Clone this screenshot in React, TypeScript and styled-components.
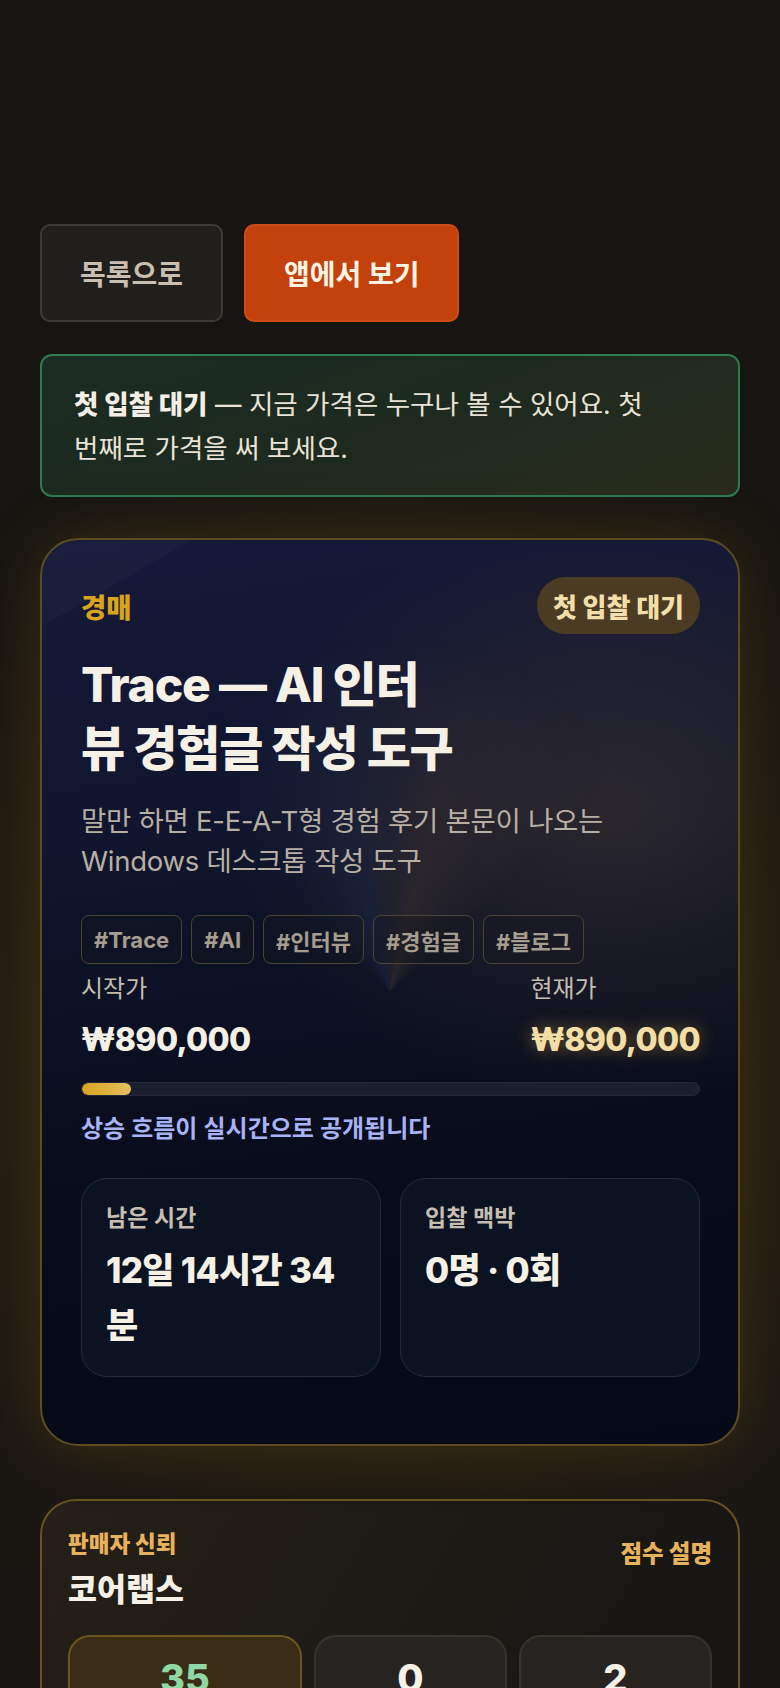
import React from "react";
import styled, { createGlobalStyle } from "styled-components";

const GlobalStyle = createGlobalStyle`
  html, body {
    margin: 0;
    padding: 0;
  }
  body {
    background: #161513;
    font-family: "Inter", "Noto Sans CJK KR", "Noto Sans", sans-serif;
    color: #f3ede0;
  }
  * { box-sizing: border-box; }
`;

const Page = styled.main`
  min-height: 1688px;
  padding: 224px 40px 60px 40px;
  background:
    radial-gradient(ellipse 85% 42% at 50% 56%, rgba(75, 58, 16, 0.6) 0%, rgba(52, 41, 16, 0.42) 45%, rgba(22, 21, 19, 0) 85%),
    linear-gradient(180deg, #161513 0%, #171511 30%, #1c1812 60%, #171513 100%);
  display: flex;
  flex-direction: column;
`;

const ActionRow = styled.div`
  display: flex;
  gap: 21px;
`;

const ActionButton = styled.button<{ $primary?: boolean }>`
  height: 98px;
  padding: 0 38px;
  border-radius: 10px;
  font-family: inherit;
  font-size: 28px;
  font-weight: 700;
  display: inline-flex;
  align-items: center;
  cursor: pointer;
  border: 2px solid ${(p) => (p.$primary ? "#cf4c14" : "#3c3a36")};
  background: ${(p) => (p.$primary ? "#c2410c" : "#201f1c")};
  color: ${(p) => (p.$primary ? "#fff3e4" : "#c9bfb0")};
`;

const Notice = styled.div`
  margin-top: 32px;
  padding: 26px 32px 25px;
  border: 2px solid #2e7a51;
  border-radius: 12px;
  background: linear-gradient(160deg, #1a2c23 0%, #1d2a20 45%, #2a2c1b 100%);
  font-size: 26.5px;
  line-height: 44px;
  word-break: keep-all;
  color: #e9e3d6;
  strong {
    font-weight: 800;
    color: #f4efe4;
  }
`;

const AuctionCard = styled.section`
  margin-top: 41px;
  position: relative;
  isolation: isolate;
  border: 2px solid #5b4c22;
  border-radius: 38px;
  padding: 37px 38px 67px 39px;
  overflow: hidden;
  box-shadow: 0 0 60px rgba(120, 92, 25, 0.3);
  background:
    radial-gradient(ellipse 55% 32% at 82% 30%, rgba(125, 98, 52, 0.24) 0%, rgba(0, 0, 0, 0) 100%),
    linear-gradient(150deg, rgba(255, 255, 255, 0.025) 0%, rgba(255, 255, 255, 0.025) 6.5%, rgba(0, 0, 0, 0) 6.7%),
    linear-gradient(172deg, #161a39 0%, #10142b 35%, #080c1b 65%, #060a17 100%);

  &::before {
    content: "";
    position: absolute;
    inset: 0;
    z-index: -1;
    pointer-events: none;
    background: conic-gradient(
      from 0deg at 50% 50%,
      rgba(140, 125, 110, 0.1) 0deg,
      rgba(190, 140, 60, 0.14) 14deg,
      rgba(0, 0, 0, 0) 50deg,
      rgba(0, 0, 0, 0) 310deg,
      rgba(60, 100, 180, 0.14) 346deg,
      rgba(140, 125, 110, 0.1) 360deg
    );
    -webkit-mask-image: radial-gradient(ellipse 45% 40% at 50% 50%, #000 0%, rgba(0, 0, 0, 0.5) 50%, transparent 100%);
    mask-image: radial-gradient(ellipse 45% 40% at 50% 50%, #000 0%, rgba(0, 0, 0, 0.5) 50%, transparent 100%);
  }
`;

const CardHead = styled.div`
  display: flex;
  justify-content: space-between;
  align-items: center;
`;

const Kicker = styled.span`
  font-size: 27.5px;
  font-weight: 800;
  color: #d9a41c;
`;

const StatusPill = styled.span`
  height: 57px;
  padding: 0 16px;
  display: inline-flex;
  align-items: center;
  border-radius: 999px;
  background: #4a3b22;
  color: #f2deaa;
  font-size: 26px;
  font-weight: 800;
`;

const Title = styled.h1`
  margin: 19px 0 0;
  font-size: 48px;
  font-weight: 800;
  line-height: 64px;
  letter-spacing: -0.025em;
  color: #f6f1e6;
`;

const Subtitle = styled.p`
  margin: 20px 0 0;
  font-size: 27.5px;
  line-height: 40px;
  color: #b7afa3;
  letter-spacing: -0.01em;
`;

const TagRow = styled.div`
  margin-top: 34px;
  display: flex;
  flex-wrap: wrap;
  gap: 9px;
`;

const Tag = styled.span`
  height: 49px;
  padding: 0 12px;
  display: inline-flex;
  align-items: center;
  border: 1.5px solid #4b4230;
  border-radius: 8px;
  background: rgba(20, 22, 30, 0.35);
  font-size: 22px;
  font-weight: 700;
  color: #a59d8f;
`;

const PriceRow = styled.div`
  margin-top: 10px;
  display: flex;
  justify-content: space-between;
`;

const PriceCol = styled.div`
  display: flex;
  flex-direction: column;
  gap: 14px;
`;

const PriceLabel = styled.span`
  font-size: 24px;
  line-height: 30px;
  color: #c4bcaf;
`;

const PriceValue = styled.span<{ $current?: boolean }>`
  font-size: 32px;
  line-height: 44px;
  font-weight: 800;
  letter-spacing: -0.02em;
  color: ${(p) => (p.$current ? "#f3dfa6" : "#f5f0e6")};
  text-shadow: ${(p) => (p.$current ? "0 0 18px rgba(230, 180, 70, 0.45)" : "none")};
`;

const Track = styled.div`
  margin-top: 20px;
  height: 14px;
  border-radius: 999px;
  background: #1b1f2d;
  border: 1px solid #23283a;
  overflow: hidden;
`;

const Fill = styled.div`
  height: 100%;
  border-radius: 999px;
  background: linear-gradient(90deg, #d9a21c 0%, #e7c063 100%);
`;

const LiveNote = styled.p`
  margin: 17px 0 0;
  font-size: 24px;
  line-height: 32px;
  font-weight: 600;
  color: #a7b3f5;
`;

const StatGrid = styled.div`
  margin-top: 33px;
  display: grid;
  grid-template-columns: 1fr 1fr;
  gap: 19px;
`;

const StatBox = styled.div`
  border: 1.5px solid #242a3c;
  border-radius: 26px;
  background: #0b1222;
  padding: 24px 24px 23px;
  display: flex;
  flex-direction: column;
  gap: 10px;
`;

const StatLabel = styled.span`
  font-size: 23px;
  line-height: 30px;
  font-weight: 600;
  color: #c6beb0;
`;

const StatValue = styled.span`
  font-size: 35px;
  line-height: 55px;
  font-weight: 800;
  letter-spacing: -0.02em;
  color: #f6f1e6;
`;

const SellerCard = styled.section`
  margin-top: 53px;
  border: 2px solid #6a5322;
  border-radius: 36px;
  padding: 29px 26px 28px;
  background: linear-gradient(120deg, #251f17 0%, #1d1a16 55%, #151413 100%);
`;

const SellerHead = styled.div`
  display: flex;
  justify-content: space-between;
  align-items: flex-start;
`;

const SellerMeta = styled.div`
  display: flex;
  flex-direction: column;
  gap: 12px;
`;

const SellerKicker = styled.span`
  font-size: 22.5px;
  line-height: 28px;
  font-weight: 800;
  color: #e6b35c;
`;

const SellerName = styled.span`
  font-size: 31.5px;
  line-height: 40px;
  font-weight: 800;
  color: #f6f1e6;
`;

const LinkButton = styled.button`
  margin-top: 9px;
  padding: 0;
  border: 0;
  background: none;
  font-family: inherit;
  font-size: 23.5px;
  line-height: 30px;
  font-weight: 800;
  color: #e6b35c;
  cursor: pointer;
`;

const ScoreGrid = styled.div`
  margin-top: 25px;
  display: grid;
  grid-template-columns: 1.21fr 1fr 1fr;
  gap: 12px;
`;

const ScoreBox = styled.div<{ $highlight?: boolean }>`
  border-radius: 22px;
  border: 2px solid ${(p) => (p.$highlight ? "#6d5522" : "#36322d")};
  background: ${(p) => (p.$highlight ? "#3a2c15" : "#262320")};
  padding: 18px 12px 20px;
  display: flex;
  flex-direction: column;
  align-items: center;
  gap: 6px;
`;

const ScoreNum = styled.span<{ $tone?: string }>`
  font-size: 38px;
  line-height: 46px;
  font-weight: 800;
  color: ${(p) => p.$tone || "#f6f1e6"};
`;

const ScoreLabel = styled.span`
  font-size: 18px;
  color: #b9b0a2;
`;

export default function App() {
  const progress = 8;
  return (
    <>
      <GlobalStyle />
      <Page>
        <ActionRow>
          <ActionButton>목록으로</ActionButton>
          <ActionButton $primary>앱에서 보기</ActionButton>
        </ActionRow>

        <Notice>
          <strong>첫 입찰 대기</strong> — 지금 가격은 누구나 볼 수 있어요. 첫 번째로 가격을 써 보세요.
        </Notice>

        <AuctionCard>
          <CardHead>
            <Kicker>경매</Kicker>
            <StatusPill>첫 입찰 대기</StatusPill>
          </CardHead>
          <Title>
            Trace — AI 인터
            <br />뷰 경험글 작성 도구
          </Title>
          <Subtitle>말만 하면 E-E-A-T형 경험 후기 본문이 나오는 Windows 데스크톱 작성 도구</Subtitle>
          <TagRow>
            {["#Trace", "#AI", "#인터뷰", "#경험글", "#블로그"].map((t) => (
              <Tag key={t}>{t}</Tag>
            ))}
          </TagRow>
          <PriceRow>
            <PriceCol>
              <PriceLabel>시작가</PriceLabel>
              <PriceValue>₩890,000</PriceValue>
            </PriceCol>
            <PriceCol>
              <PriceLabel>현재가</PriceLabel>
              <PriceValue $current>₩890,000</PriceValue>
            </PriceCol>
          </PriceRow>
          <Track>
            <Fill style={{ width: `${progress}%` }} />
          </Track>
          <LiveNote>상승 흐름이 실시간으로 공개됩니다</LiveNote>
          <StatGrid>
            <StatBox>
              <StatLabel>남은 시간</StatLabel>
              <StatValue>12일 14시간 34분</StatValue>
            </StatBox>
            <StatBox>
              <StatLabel>입찰 맥박</StatLabel>
              <StatValue>0명 · 0회</StatValue>
            </StatBox>
          </StatGrid>
        </AuctionCard>

        <SellerCard>
          <SellerHead>
            <SellerMeta>
              <SellerKicker>판매자 신뢰</SellerKicker>
              <SellerName>코어랩스</SellerName>
            </SellerMeta>
            <LinkButton>점수 설명</LinkButton>
          </SellerHead>
          <ScoreGrid>
            <ScoreBox $highlight>
              <ScoreNum $tone="#8fd8a6">35</ScoreNum>
              <ScoreLabel>신뢰 점수</ScoreLabel>
            </ScoreBox>
            <ScoreBox>
              <ScoreNum>0</ScoreNum>
              <ScoreLabel>거래 완료</ScoreLabel>
            </ScoreBox>
            <ScoreBox>
              <ScoreNum>2</ScoreNum>
              <ScoreLabel>등록 상품</ScoreLabel>
            </ScoreBox>
          </ScoreGrid>
        </SellerCard>
      </Page>
    </>
  );
}
